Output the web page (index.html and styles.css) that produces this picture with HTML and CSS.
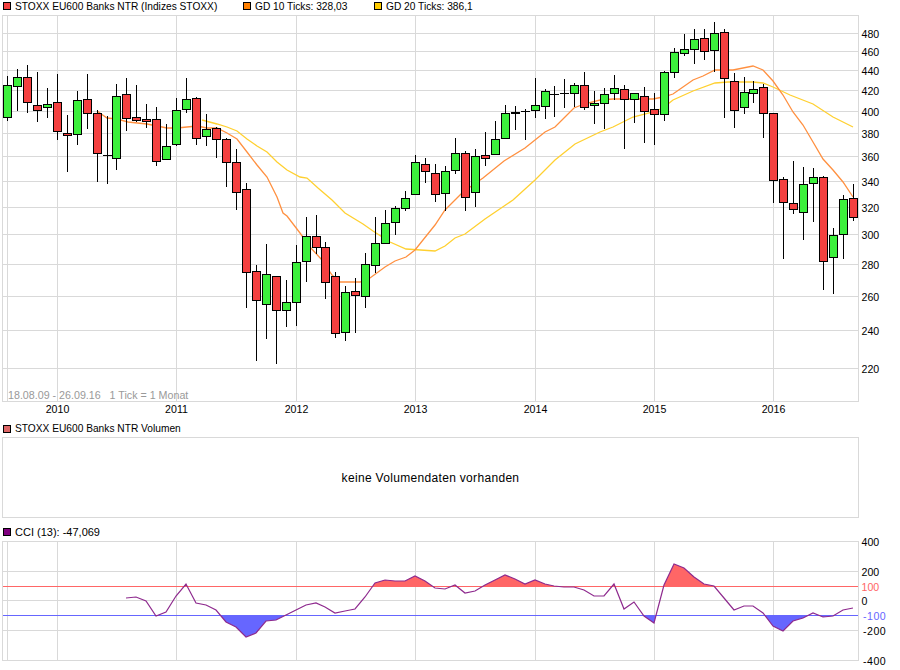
FILE: index.html
```html
<!DOCTYPE html>
<html lang="en">

<head>
    <meta charset="UTF-8">
    <meta name="viewport" content="width=device-width, initial-scale=1.0">
    <title>STOXX EU600 Banks NTR</title>
    <link rel="stylesheet" href="styles.css">
</head>

<body>
    <div class="legend legend-main">
        <span class="legend-item item-name"><i class="swatch swatch-red"></i>STOXX EU600 Banks NTR (Indizes STOXX)</span>
        <span class="legend-item item-gd10"><i class="swatch swatch-orange"></i>GD 10 Ticks: 328,03</span>
        <span class="legend-item"><i class="swatch swatch-yellow"></i>GD 20 Ticks: 386,1</span>
    </div>

    <svg class="chart chart-price" viewBox="0 15 900 405">
        <path class="grid-line" d="M2.5 33.5H858M2.5 51.5H858M2.5 70.5H858M2.5 90.5H858M2.5 111.5H858M2.5 133.5H858M2.5 156.5H858M2.5 181.5H858M2.5 207.5H858M2.5 234.5H858M2.5 264.5H858M2.5 296.5H858M2.5 330.5H858M2.5 368.5H858
            M7.5 15V401M57.5 15V401M176.5 15V401M296.5 15V401M415.5 15V401M535.5 15V401M654.5 15V401M773.5 15V401" />
        <rect class="grid-line" x="2.5" y="15.5" width="856" height="386" fill="none" />

        <polyline class="ma-line ma-20" points="202,120 217,124 227,127 237,131 247,139 257,146 267,152 277,162 287,170 300,177 307,178 318,188 332,200 345,213 363,224 373,231 390,242 406,249 435,251 445,246 455,238 465,234 485,219 513,200 535,180 555,160 575,144 600,132 613,127 633,117 653,112 663,108 673,100 693,91 715,83 728,82 753,82 763,83 773,87 790,95 813,104 833,117 853,127" />
        <polyline class="ma-line ma-10" points="97,111 107,118 117,119 128,122 147,124 167,128 177,128 187,127 197,126 207,128 217,128 227,133 237,139 247,152 257,165 267,177 277,197 283,213 287,216 300,233 310,247 322,260 332,275 340,282 360,282 370,278 385,267 395,261 406,257 415,250 435,225 445,210 455,200 463,192 483,178 504,161 525,148 545,132 555,127 565,117 574,108 584,104 600,100 613,99 653,99 663,97 673,94 683,87 693,80 703,76 715,70 733,70 753,66 763,70 773,81 783,95 793,112 803,125 813,142 823,159 833,170 843,182 853,197" />

        <g id="candles"></g>

        <text class="range-label" x="8" y="399">18.08.09 - 26.09.16   1 Tick = 1 Monat</text>

        <g class="axis-y">
            <text x="861.5" y="38">480</text>
            <text x="861.5" y="56">460</text>
            <text x="861.5" y="75">440</text>
            <text x="861.5" y="95">420</text>
            <text x="861.5" y="116">400</text>
            <text x="861.5" y="138">380</text>
            <text x="861.5" y="161">360</text>
            <text x="861.5" y="186">340</text>
            <text x="861.5" y="212">320</text>
            <text x="861.5" y="239">300</text>
            <text x="861.5" y="269">280</text>
            <text x="861.5" y="301">260</text>
            <text x="861.5" y="335">240</text>
            <text x="861.5" y="373">220</text>
        </g>
        <g class="axis-x">
            <text x="57.5" y="413">2010</text>
            <text x="176.5" y="413">2011</text>
            <text x="296.5" y="413">2012</text>
            <text x="415.5" y="413">2013</text>
            <text x="535.5" y="413">2014</text>
            <text x="654.5" y="413">2015</text>
            <text x="773.5" y="413">2016</text>
        </g>
    </svg>

    <div class="legend legend-volume">
        <span class="legend-item"><i class="swatch swatch-volume"></i>STOXX EU600 Banks NTR Volumen</span>
    </div>
    <div class="volume-panel">keine Volumendaten vorhanden</div>

    <div class="legend legend-cci">
        <span class="legend-item"><i class="swatch swatch-purple"></i>CCI (13): -47,069</span>
    </div>

    <svg class="chart chart-cci" viewBox="0 541 900 129">
        <defs>
            <path id="cci-path" d="M126 598L136 597L146 601L156 616L166 612L176 596L186 584L196 603L206 605L216 610L226 622L236 627L246 637L256 633L266 621L276 620L286 615L296 610L306 605L316 603L325 607L335 613L345 611L355 609L365 597L375 583L385 580L395 581L405 581L415 576L425 581L435 588L445 589L455 585L465 593L475 591L485 585L495 580L505 575L515 579L525 584L535 580L545 584L554 586L564 587L574 587L584 590L594 596L604 596L614 584L624 609L634 602L644 616L654 623L664 585L674 564L684 568L694 577L704 584L714 586L724 598L734 610L744 606L753 606L763 613L773 626L783 631L793 621L803 618L813 613L823 617L833 616L843 610L853 608" />
            <clipPath id="above-100">
                <rect x="0" y="541" width="900" height="46" />
            </clipPath>
            <clipPath id="below-100">
                <rect x="0" y="615" width="900" height="55" />
            </clipPath>
        </defs>

        <path class="grid-line" d="M2.5 571.5H858M2.5 600.5H858M2.5 630.5H858
            M7.5 541V660M57.5 541V660M176.5 541V660M296.5 541V660M415.5 541V660M535.5 541V660M654.5 541V660M773.5 541V660" />
        <rect class="grid-line" x="2.5" y="541.5" width="856" height="119" fill="none" />

        <use href="#cci-path" class="cci-over" clip-path="url(#above-100)" />
        <use href="#cci-path" class="cci-under" clip-path="url(#below-100)" />
        <path class="level-line level-over" d="M2.5 586.5H858" />
        <path class="level-line level-under" d="M2.5 615.5H858" />
        <use href="#cci-path" class="cci-line" />

        <g class="axis-y">
            <text x="861.5" y="546">400</text>
            <text x="861.5" y="576">200</text>
            <text class="label-over" x="861.5" y="591">100</text>
            <text x="861.5" y="605">0</text>
            <text class="label-under label-neg" x="863" y="620">-100</text>
            <text class="label-neg" x="863" y="635">-200</text>
            <text class="label-neg" x="863" y="665">-400</text>
        </g>
    </svg>

    <script src="chart.js"></script>
</body>

</html>
```

FILE: styles.css
```css
* {
    margin: 0;
    padding: 0;
    box-sizing: border-box;
}

body,
html {
    width: 100%;
    height: 100%;
    background-color: #FFF;
    font-family: "Liberation Sans", Arial, sans-serif;
    font-size: 10.2px;
    color: #000;
    overflow: hidden;
}

.legend {
    display: flex;
    align-items: center;
    padding-left: 3px;
    white-space: nowrap;
}

.legend-main {
    height: 15px;
    padding-bottom: 3px;
}

.legend-volume {
    height: 17px;
}

.legend-cci {
    height: 23px;
    padding-top: 5px;
    font-size: 11px;
}

.legend-item {
    display: flex;
    align-items: center;
}

.item-name {
    width: 240px;
}

.item-gd10 {
    width: 131px;
}

.swatch {
    flex-shrink: 0;
    width: 8px;
    height: 8px;
    margin-right: 4px;
    border: 1px solid #000;
}

.swatch-red {
    background-color: #F44040;
}

.swatch-orange {
    background-color: #FF8000;
}

.swatch-yellow {
    background-color: #FFCC00;
}

.swatch-volume {
    background-color: #DD6666;
}

.swatch-purple {
    background-color: #800080;
}

.chart {
    display: block;
    width: 900px;
    overflow: visible;
}

.chart-price {
    height: 405px;
}

.chart-cci {
    height: 129px;
}

.grid-line {
    fill: none;
    stroke: #D9D9D9;
    stroke-width: 1;
    shape-rendering: crispEdges;
}

.ma-line {
    fill: none;
    stroke-width: 1.3;
}

.ma-10 {
    stroke: #FF9040;
}

.ma-20 {
    stroke: #FFD030;
}

.wick,
.doji {
    stroke: #000;
    stroke-width: 1;
    shape-rendering: crispEdges;
}

.body-up,
.body-down {
    stroke: #000;
    stroke-width: 1;
    shape-rendering: crispEdges;
}

.body-up {
    fill: #3CF03C;
}

.body-down {
    fill: #F44040;
}

.range-label {
    fill: #999;
    font-size: 10.7px;
    white-space: pre;
}

.axis-y text,
.axis-x text {
    font-size: 10.6px;
    fill: #000;
}

.axis-x text {
    text-anchor: middle;
}

.volume-panel {
    display: flex;
    align-items: center;
    justify-content: center;
    width: 857px;
    height: 81px;
    margin-left: 2px;
    font-size: 12px;
    letter-spacing: 0.32px;
    border: 1px solid #D9D9D9;
}

.cci-over {
    fill: #FF6666;
}

.cci-under {
    fill: #6666FF;
}

.level-line {
    fill: none;
    stroke-width: 1;
    shape-rendering: crispEdges;
}

.level-over {
    stroke: #FF6666;
}

.level-under {
    stroke: #6666FF;
}

.cci-line {
    fill: none;
    stroke: #8E2A8E;
    stroke-width: 1.2;
}

.axis-y .label-over {
    fill: #FF6666;
}

.axis-y .label-under {
    fill: #6666FF;
}

.axis-y .label-neg {
    letter-spacing: 0.5px;
}
```

FILE: chart.js
```js
// x, high, low, body top, body bottom, direction (1 up, 0 down)
const candles = [
    [7, 76, 120, 85, 117, 1], [17, 69, 110, 77, 86, 1], [27, 65, 112, 77, 102, 0], [37, 72, 121, 105, 110, 0],
    [47, 88, 117, 104, 107, 1], [57, 74, 139, 102, 131, 0], [67, 115, 171, 133, 135, 0], [77, 91, 144, 100, 134, 1],
    [87, 74, 128, 99, 113, 0], [97, 110, 181, 113, 153, 0], [107, 116, 183, 155, 155, 0], [116, 84, 169, 96, 158, 1],
    [126, 78, 130, 94, 118, 0], [136, 85, 121, 117, 120, 0], [146, 104, 127, 119, 121, 0], [156, 107, 165, 119, 161, 0],
    [166, 124, 159, 146, 159, 1], [176, 98, 145, 110, 144, 1], [186, 78, 112, 99, 109, 1], [196, 97, 144, 98, 138, 0],
    [206, 114, 145, 129, 136, 1], [216, 127, 157, 128, 139, 0], [226, 138, 186, 139, 162, 0], [236, 149, 209, 162, 192, 0],
    [246, 183, 307, 189, 272, 0], [256, 265, 360, 271, 300, 0], [266, 244, 338, 274, 304, 1], [276, 276, 363, 276, 310, 0],
    [286, 280, 326, 302, 310, 1], [296, 245, 325, 262, 302, 1], [306, 217, 281, 236, 261, 1], [316, 215, 253, 236, 247, 0],
    [325, 242, 298, 247, 282, 0], [335, 272, 337, 276, 333, 0], [345, 286, 340, 292, 332, 1], [355, 278, 332, 291, 295, 0],
    [365, 253, 307, 264, 296, 1], [375, 217, 272, 243, 265, 1], [385, 210, 243, 223, 243, 1], [395, 206, 234, 208, 222, 1],
    [405, 191, 210, 198, 208, 1], [415, 155, 194, 162, 194, 1], [425, 158, 182, 164, 171, 0], [435, 164, 201, 173, 194, 0],
    [445, 166, 210, 171, 193, 1], [455, 138, 173, 153, 170, 1], [465, 151, 210, 153, 197, 0], [475, 149, 206, 156, 192, 1],
    [485, 132, 165, 155, 158, 0], [495, 121, 154, 139, 154, 1], [505, 105, 138, 113, 138, 1], [515, 106, 129, 112, 113, 0],
    [525, 109, 139, 111, 111, 0], [535, 78, 117, 105, 110, 1], [545, 89, 118, 91, 106, 1], [554, 86, 116, 94, 94, 0],
    [564, 79, 107, 93, 93, 0], [574, 83, 106, 85, 93, 1], [584, 72, 109, 85, 107, 0], [594, 91, 123, 103, 105, 1],
    [604, 88, 128, 94, 103, 1], [614, 75, 99, 88, 93, 1], [624, 85, 148, 89, 99, 0], [634, 93, 122, 93, 99, 1],
    [644, 87, 142, 96, 111, 0], [654, 93, 144, 109, 114, 0], [664, 71, 120, 72, 114, 1], [674, 48, 77, 52, 72, 1],
    [684, 34, 55, 49, 53, 1], [694, 29, 63, 39, 49, 1], [704, 29, 59, 38, 51, 0], [714, 22, 71, 33, 50, 1],
    [724, 29, 117, 32, 78, 0], [734, 73, 127, 81, 110, 0], [744, 77, 113, 92, 107, 1], [753, 81, 102, 89, 93, 1],
    [763, 84, 137, 87, 113, 0], [773, 113, 202, 113, 180, 0], [783, 177, 258, 179, 202, 0], [793, 161, 213, 203, 209, 0],
    [803, 167, 239, 184, 212, 1], [813, 168, 221, 177, 183, 1], [823, 176, 289, 177, 261, 0], [833, 228, 293, 235, 257, 1],
    [843, 195, 258, 199, 234, 1], [853, 184, 220, 198, 217, 0]
];

let markup = '';
for (const [x, high, low, top, bottom, up] of candles) {
    markup += `<line class="wick" x1="${x + 0.5}" x2="${x + 0.5}" y1="${high}" y2="${low + 1}"></line>`;
    if (top === bottom) {
        markup += `<line class="doji" x1="${x - 4}" x2="${x + 5}" y1="${top + 0.5}" y2="${top + 0.5}"></line>`;
    } else {
        const cls = up ? 'body-up' : 'body-down';
        markup += `<rect class="${cls}" x="${x - 3.5}" y="${top + 0.5}" width="8" height="${bottom - top}"></rect>`;
    }
}
document.getElementById('candles').innerHTML = markup;
```
